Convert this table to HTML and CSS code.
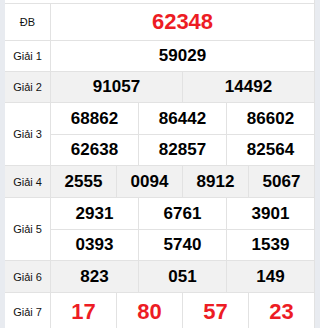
FILE: index.html
```html
<!DOCTYPE html>
<html>
<head>
<meta charset="utf-8">
<link rel="stylesheet" href="styles.css">
</head>
<body>
<div class="board">
  <div class="top"></div>
  <div class="row h37">
    <div class="label">ĐB</div>
    <div class="cells c1"><div class="cell big red">62348</div></div>
  </div>
  <div class="row h31">
    <div class="label">Giải 1</div>
    <div class="cells c1"><div class="cell">59029</div></div>
  </div>
  <div class="row h31 alt">
    <div class="label">Giải 2</div>
    <div class="cells c2"><div class="cell">91057</div><div class="cell">14492</div></div>
  </div>
  <div class="row h63">
    <div class="label">Giải 3</div>
    <div class="cells c3 r2">
      <div class="cell">68862</div><div class="cell">86442</div><div class="cell">86602</div>
      <div class="cell">62638</div><div class="cell">82857</div><div class="cell">82564</div>
    </div>
  </div>
  <div class="row h32 alt">
    <div class="label">Giải 4</div>
    <div class="cells c4"><div class="cell">2555</div><div class="cell">0094</div><div class="cell">8912</div><div class="cell">5067</div></div>
  </div>
  <div class="row h63">
    <div class="label">Giải 5</div>
    <div class="cells c3 r2">
      <div class="cell">2931</div><div class="cell">6761</div><div class="cell">3901</div>
      <div class="cell">0393</div><div class="cell">5740</div><div class="cell">1539</div>
    </div>
  </div>
  <div class="row h32 alt">
    <div class="label">Giải 6</div>
    <div class="cells c3"><div class="cell">823</div><div class="cell">051</div><div class="cell">149</div></div>
  </div>
  <div class="row h38">
    <div class="label">Giải 7</div>
    <div class="cells c4"><div class="cell big red">17</div><div class="cell big red">80</div><div class="cell big red">57</div><div class="cell big red">23</div></div>
  </div>
</div>
</body>
</html>
```
FILE: styles.css
```css
html, body {
  margin: 0;
  padding: 0;
  background: #e8ebf0;
}
body {
  font-family: "Liberation Sans", Arial, sans-serif;
  color: #000;
  padding: 0 5px;
}
.board {
  background: #fff;
  border-right: 1px solid #e2e2e2;
  overflow: hidden;
}
.top {
  height: 3px;
}
.row {
  display: flex;
  border-top: 1px solid #e2e2e2;
  box-sizing: border-box;
}
.h37 { height: 37px; }
.h31 { height: 31px; }
.h32 { height: 32px; }
.h63 { height: 63px; }
.h38 { height: 38px; }
.label {
  width: 45px;
  flex: none;
  border-right: 1px solid #e2e2e2;
  display: flex;
  align-items: center;
  justify-content: center;
  font-size: 11px;
  color: #111;
}
.cells {
  flex: 1;
  display: grid;
  gap: 1px;
  background: #e2e2e2;
}
.c1 { grid-template-columns: 1fr; }
.c2 { grid-template-columns: 1fr 1fr; }
.c3 { grid-template-columns: 1fr 1fr 1fr; }
.c4 { grid-template-columns: 1fr 1fr 1fr 1fr; }
.r2 { grid-template-rows: 31px 1fr; }
.cell {
  background: #fff;
  display: flex;
  align-items: center;
  justify-content: center;
  font-size: 17px;
  font-weight: bold;
}
.alt .label, .alt .cell {
  background: #f1f1f1;
}
.big {
  font-size: 22px;
}
.red {
  color: #ed1c24;
}
```
